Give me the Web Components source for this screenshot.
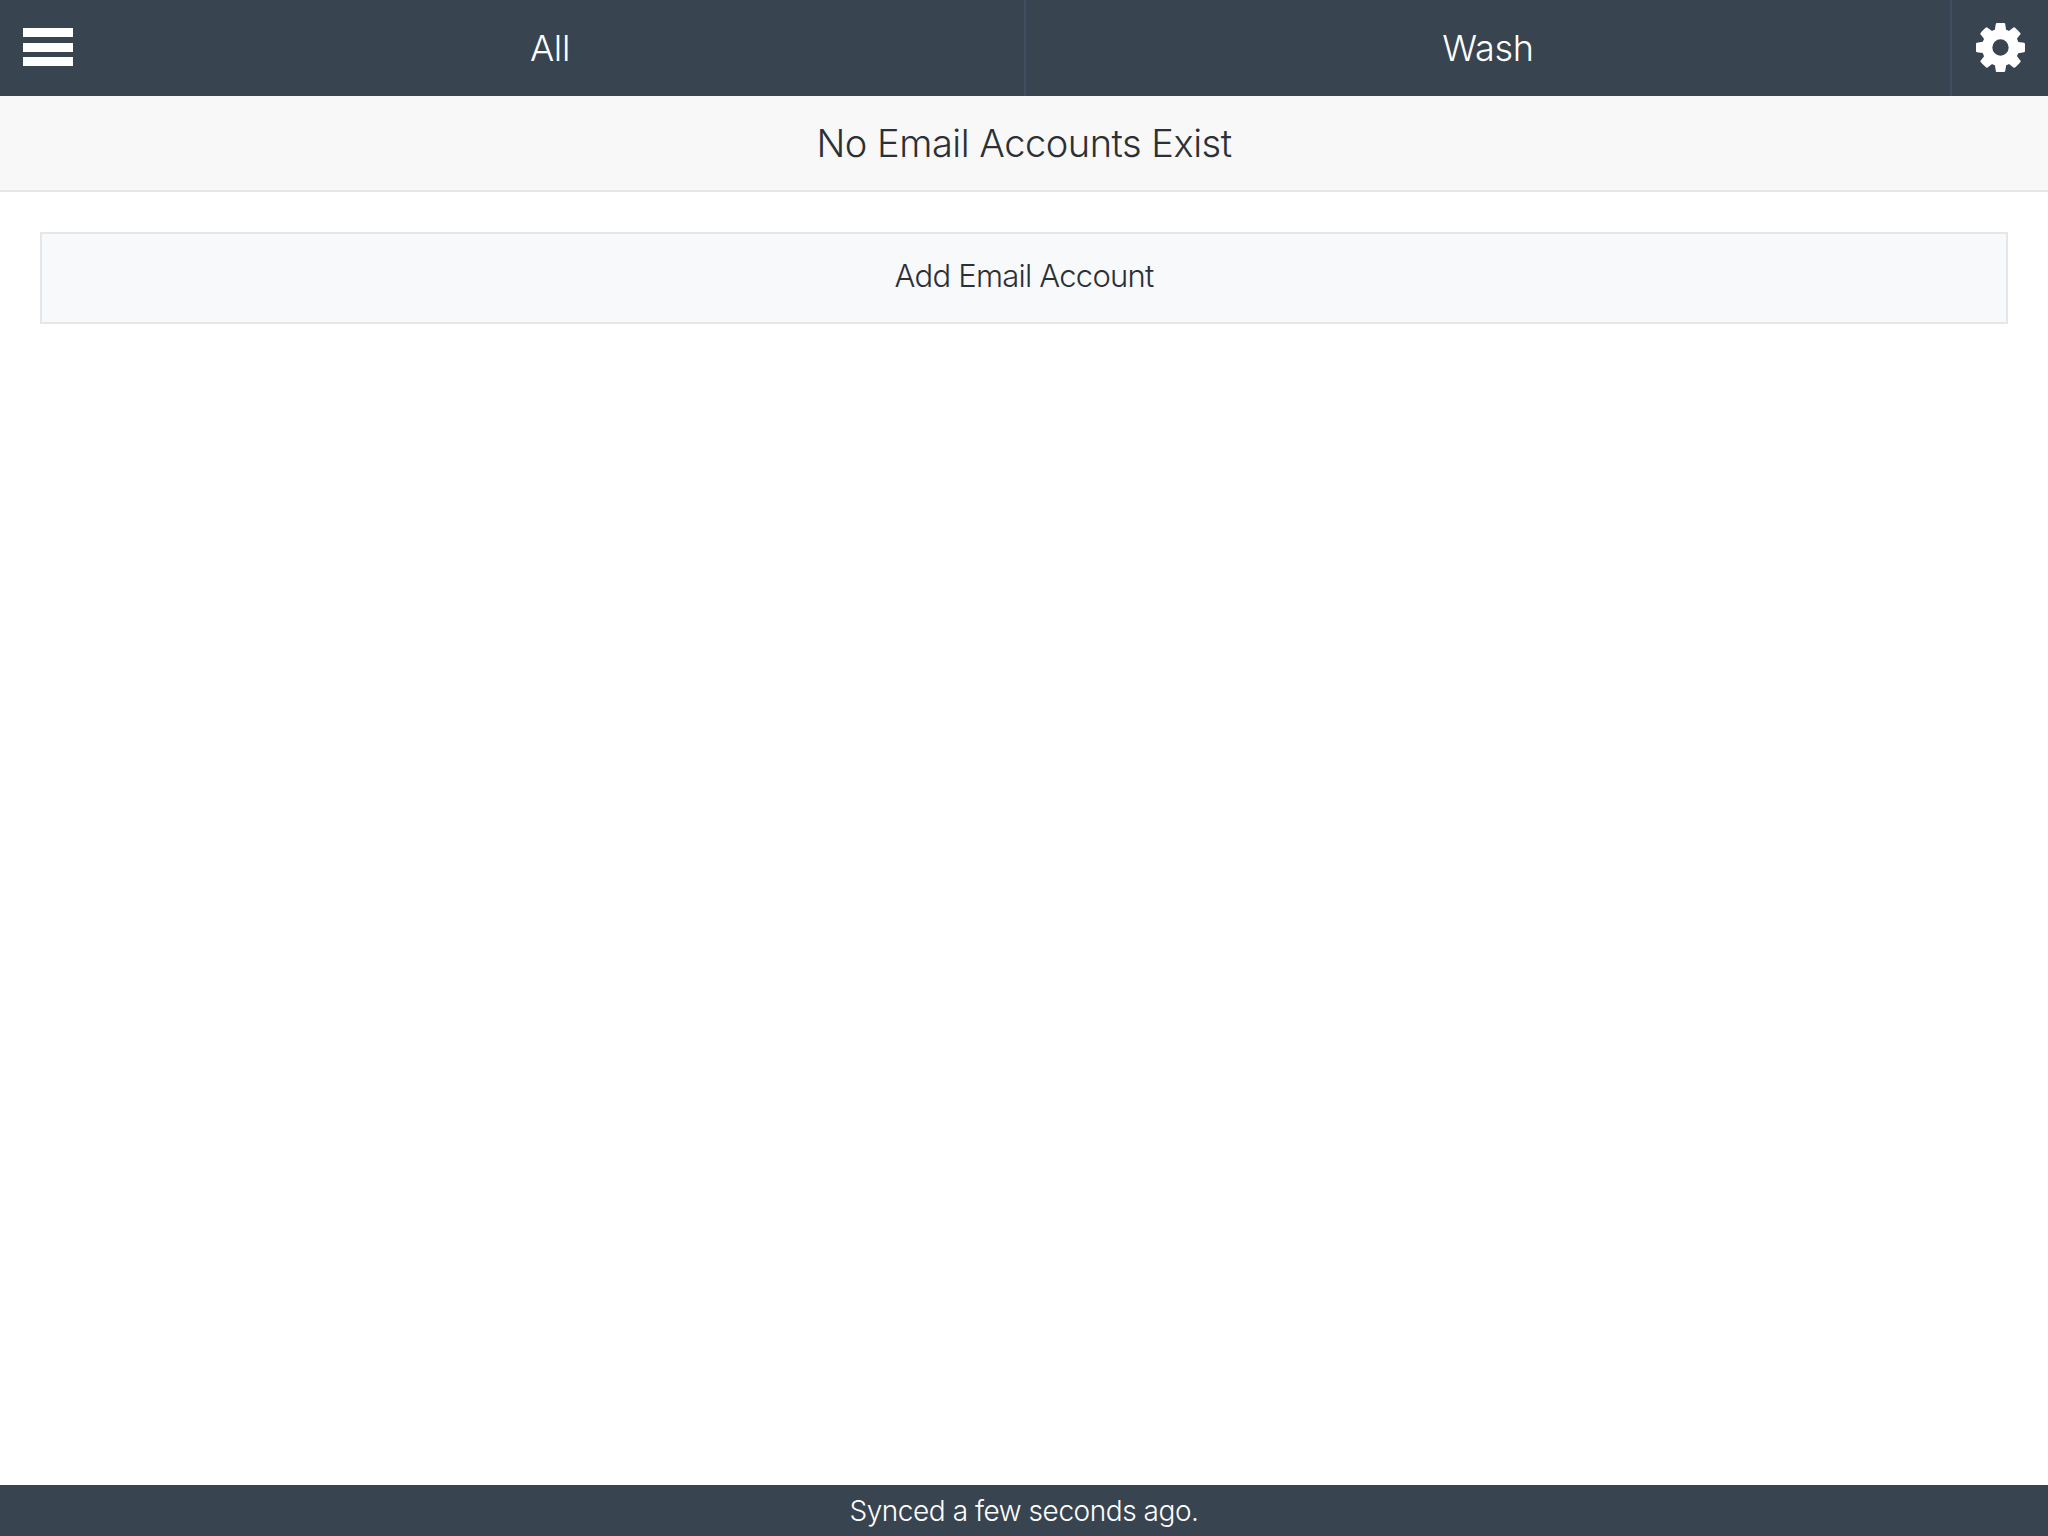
<!DOCTYPE html>
<html>
<head>
<meta charset="utf-8">
<title>Email Accounts</title>
<style>
  html, body { margin: 0; height: 100%; background: #fff; }
  body { font-family: Inter, "Liberation Sans", Arial, sans-serif; }
</style>
</head>
<body>
<app-shell>
  <top-bar slot="top"></top-bar>
  <status-title slot="top">No Email Accounts Exist</status-title>
  <add-button>Add Email Account</add-button>
  <sync-footer slot="bottom">Synced a few seconds ago.</sync-footer>
</app-shell>
<script>
class AppShell extends HTMLElement {
    constructor() {
        super();
        this.attachShadow({ mode: 'open' });
        this.shadowRoot.innerHTML = `
        <style>
            :host { display: flex; flex-direction: column; height: 1536px; }
            .main { flex: 1; padding: 40px; }
        </style>
        <slot name="top"></slot>
        <div class="main"><slot></slot></div>
        <slot name="bottom"></slot>
        `;
    }
}

class TopBar extends HTMLElement {
    constructor() {
        super();
        this.attachShadow({ mode: 'open' });
        this.shadowRoot.innerHTML = `
        <style>
            :host { display: flex; height: 96px; background: #384450; color: #fff; font-weight: 300; font-size: 36px; letter-spacing: -0.3px; }
            .menu { width: 53px; padding-left: 23px; display: flex; flex-direction: column; justify-content: center; gap: 5.7px; padding-bottom: 2px; }
            .menu span { display: block; width: 49.5px; height: 9px; background: #fff; }
            .tab { display: flex; align-items: center; justify-content: center; }
            .all { width: 948px; }
            .wash { flex: 1; border-left: 2px solid #404e62; border-right: 2px solid #404e62; }
            .gear { width: 96px; display: flex; align-items: center; justify-content: center; padding-bottom: 2px; }
        </style>
        <div class="menu"><span></span><span></span><span></span></div>
        <div class="tab all">All</div>
        <div class="tab wash">Wash</div>
        <div class="gear">
            <svg width="49" height="49" viewBox="128 128 1536 1536" fill="#fff">
                <path d="M1152 896q0-106-75-181t-181-75-181 75-75 181 75 181 181 75 181-75 75-181zm512-109v222q0 12-8 23t-20 13l-185 28q-19 54-39 91 35 50 107 138 10 12 10 25t-9 23q-27 37-99 108t-94 71q-12 0-26-9l-138-108q-44 23-91 38-16 136-29 186-7 28-36 28h-222q-14 0-24.500-8.500t-11.500-21.500l-28-184q-49-16-90-37l-141 107q-10 9-25 9-14 0-25-11-126-114-165-168-7-10-7-23 0-12 8-23 15-21 51-66.500t54-70.500q-27-50-41-99l-183-27q-13-2-21-12.500t-8-23.500v-222q0-12 8-23t19-13l186-28q14-46 39-92-40-57-107-138-10-12-10-24 0-10 9-23 26-36 98.500-107.500t94.500-71.500q13 0 26 10l138 107q44-23 91-38 16-136 29-186 7-28 36-28h222q14 0 24.500 8.500t11.500 21.500l28 184q49 16 90 37l142-107q9-9 24-9 13 0 25 10 129 119 165 170 7 8 7 22 0 12-8 23-15 21-51 66.500t-54 70.500q26 50 41 98l183 28q13 2 21 12.500t8 23.500z"/>
            </svg>
        </div>
        `;
    }
}

class StatusTitle extends HTMLElement {
    constructor() {
        super();
        this.attachShadow({ mode: 'open' });
        this.shadowRoot.innerHTML = `
        <style>
            :host { display: flex; align-items: center; justify-content: center; height: 94px; background: #f8f8f8; border-bottom: 2px solid #e4e7e9; color: #2b3036; font-size: 38px; font-weight: 300; letter-spacing: -0.48px; }
        </style>
        <slot></slot>
        `;
    }
}

class AddButton extends HTMLElement {
    constructor() {
        super();
        this.attachShadow({ mode: 'open' });
        this.shadowRoot.innerHTML = `
        <style>
            :host { display: flex; align-items: center; justify-content: center; height: 82px; padding-bottom: 6px; background: #f7f9fb; border: 2px solid #e4e7e9; color: #2b3036; font-size: 31px; font-weight: 300; letter-spacing: -0.77px; }
        </style>
        <slot></slot>
        `;
    }
}

class SyncFooter extends HTMLElement {
    constructor() {
        super();
        this.attachShadow({ mode: 'open' });
        this.shadowRoot.innerHTML = `
        <style>
            :host { display: flex; align-items: center; justify-content: center; height: 51px; background: #384450; color: #fff; font-size: 28px; font-weight: 300; letter-spacing: -0.45px; }
        </style>
        <slot></slot>
        `;
    }
}

customElements.define('app-shell', AppShell);
customElements.define('top-bar', TopBar);
customElements.define('status-title', StatusTitle);
customElements.define('add-button', AddButton);
customElements.define('sync-footer', SyncFooter);
</script>
</body>
</html>
